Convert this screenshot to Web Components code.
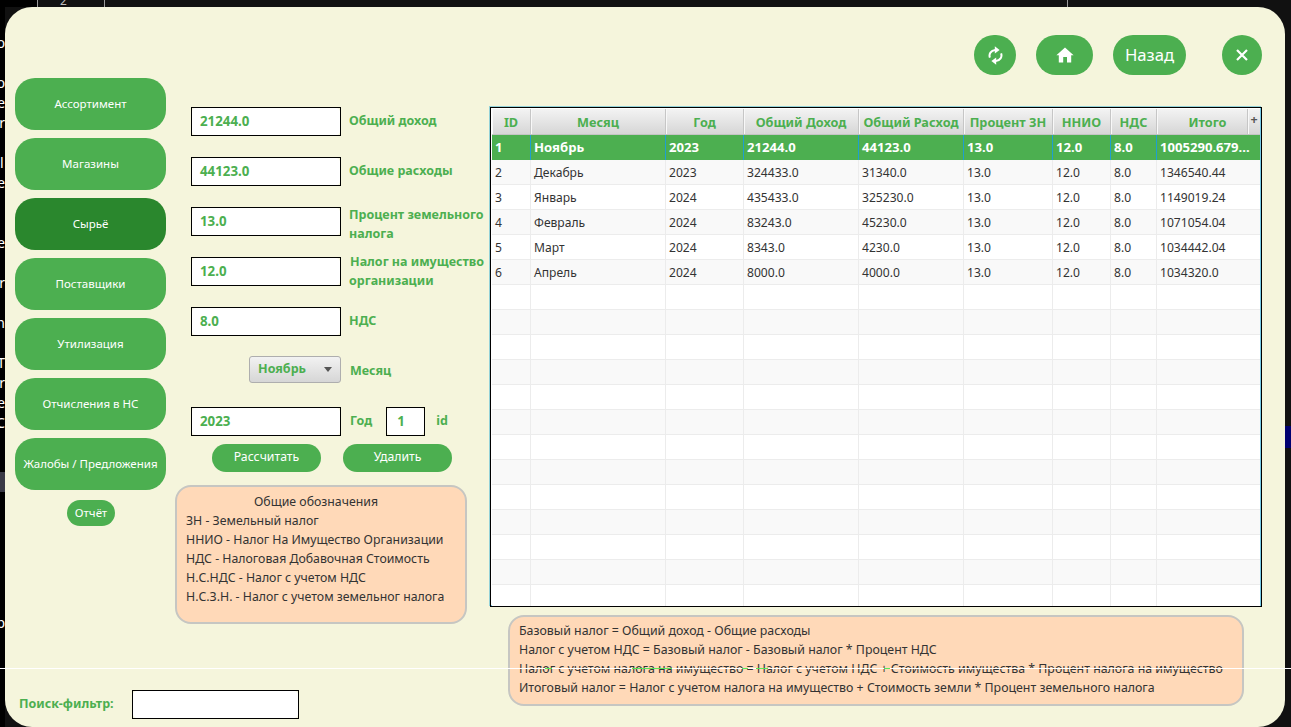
<!DOCTYPE html>
<html lang="ru">
<head>
<meta charset="utf-8">
<title>Сырьё</title>
<style>
html,body{margin:0;padding:0;background:#000;}
body{width:1291px;height:727px;overflow:hidden;font-family:"Noto Sans","Open Sans",sans-serif;}
</style>
</head>
<body>
<x-desktop>
  <x-window>
    <x-icon-btn slot="tools" w="42" icon="sync"></x-icon-btn>
    <x-icon-btn slot="tools" w="57" icon="home"></x-icon-btn>
    <x-icon-btn slot="tools" w="73" label="Назад"></x-icon-btn>
    <x-icon-btn slot="tools" w="40" gap="36" icon="close"></x-icon-btn>

    <x-nav-btn slot="nav">Ассортимент</x-nav-btn>
    <x-nav-btn slot="nav">Магазины</x-nav-btn>
    <x-nav-btn slot="nav" active>Сырьё</x-nav-btn>
    <x-nav-btn slot="nav">Поставщики</x-nav-btn>
    <x-nav-btn slot="nav">Утилизация</x-nav-btn>
    <x-nav-btn slot="nav">Отчисления в НС</x-nav-btn>
    <x-nav-btn slot="nav">Жалобы / Предложения</x-nav-btn>
    <x-small-btn slot="nav" class="report" w="48" h="26" fs="11.5">Отчёт</x-small-btn>

    <x-form slot="form"></x-form>

    <x-search slot="search"></x-search>

    <x-data-table slot="table"></x-data-table>
    <x-note slot="table" class="wide" tone="compact">
      <div>Базовый налог = Общий доход - Общие расходы</div>
      <div>Налог с учетом НДС = Базовый налог - Базовый налог * Процент НДС</div>
      <div>Налог с учетом налога на имущество = Налог с учетом НДС + Стоимость имущества * Процент налога на имущество</div>
      <div>Итоговый налог = Налог с учетом налога на имущество + Стоимость земли * Процент земельного налога</div>
    </x-note>
  </x-window>
</x-desktop>

<script>
const GREEN='#4CAF50';
const def=(name,html,init)=>{
  customElements.define(name,class extends HTMLElement{
    constructor(){super();const s=this.attachShadow({mode:'open'});s.innerHTML=typeof html==='function'?html(this):html;}
    connectedCallback(){if(init&&!this._i){this._i=1;init.call(this,this.shadowRoot);}}
  });
};

def('x-desktop',`<style>
:host{display:block;position:relative;width:1291px;height:727px;overflow:hidden;background:#111;box-sizing:border-box;padding:7px 6px 0 5px;}
.left{position:absolute;left:0;top:0;width:5px;height:727px;background:#000;overflow:hidden;color:#fff;font:14px/20px "Noto Sans",sans-serif;}
.left div{height:20px;width:5px;direction:rtl;white-space:nowrap;overflow:hidden;text-align:left;}
.corner{position:absolute;left:5px;top:0;width:32px;height:7px;background:#000;}
.vl{position:absolute;top:0;width:1px;height:7px;background:#9a9a9a;}
.two{position:absolute;left:60px;top:-6px;color:#bbb;font:12px/14px "Noto Sans",sans-serif;}
.gray{position:absolute;left:0;top:472px;width:5px;height:20px;background:#3a3a46;}
.navy{position:absolute;left:1285px;top:426px;width:6px;height:22px;background:#000070;}
.rule{position:absolute;left:0;right:0;top:668px;height:1px;z-index:5;background:linear-gradient(90deg,#fff 0,#fff 545px,#59e659 545px,#59e659 552px,#fff 552px,#fff 632px,#59e659 632px,#59e659 672px,#fff 672px,#fff 742px,#59e659 742px,#59e659 748px,#fff 748px,#fff 756px,#59e659 756px,#59e659 768px,#fff 768px,#fff 884px,#59e659 884px,#59e659 890px,#fff 890px);}
</style>
<div class="corner"></div><div class="vl" style="left:37px"></div><div class="vl" style="left:104px"></div><div class="vl" style="left:1067px"></div>
<div class="two">2</div>
<div class="left">
<div style="margin-top:33px">о</div><div></div><div>о</div><div>е</div><div>r</div><div></div><div>l</div><div>е</div><div></div><div></div><div>е</div><div></div><div>r</div><div></div><div>n</div><div></div><div>Т</div><div>r</div><div>е</div><div>С</div>
<div style="margin-top:180px">р</div>
</div>
<div class="gray"></div><div class="navy"></div>
<slot></slot>
<div class="rule"></div>`);

def('x-window',`<style>
:host{display:flex;flex-direction:column;width:1280px;height:720px;box-sizing:border-box;background:#F5F5DC;border-radius:27px;}
.tools{display:flex;justify-content:flex-end;height:40px;padding:28px 23px 0 0;}
.body{flex:1;display:flex;margin-top:3px;min-height:0;}
.left{display:flex;flex-direction:column;width:485px;flex:none;}
.top{display:flex;}
.nav{display:flex;flex-direction:column;gap:8px;width:151px;margin-left:10px;flex:none;}
.form{margin-left:9px;padding-top:29px;}
.search{margin-top:auto;padding:0 0 8px 14px;}
.right{display:flex;flex-direction:column;padding-top:29px;margin-left:0;}
</style>
<div class="tools"><slot name="tools"></slot></div>
<div class="body">
  <div class="left">
    <div class="top">
      <div class="nav"><slot name="nav"></slot></div>
      <div class="form"><slot name="form"></slot></div>
    </div>
    <div class="search"><slot name="search"></slot></div>
  </div>
  <div class="right"><slot name="table"></slot></div>
</div>`);

const ICONS={
 sync:`<svg width="15" height="19" viewBox="0 0 15 19" fill="none" stroke="#fff" stroke-width="2"><path d="M1.9 11.6C.6 8 2.8 4.4 7.2 4"/><path d="M13.1 7.4C14.4 11 12.2 14.6 7.8 15"/><path d="M6.8 .3 11.6 4 6.8 7.6z" fill="#fff" stroke="none"/><path d="M8.2 18.7 3.4 15 8.2 11.4z" fill="#fff" stroke="none"/></svg>`,
 home:`<svg width="18" height="16" viewBox="0 0 18 16"><path fill="#fff" d="M9 .5 17.6 8.2h-2.4V15.5H11V10H7.2v5.5H2.8V8.2H.4z"/></svg>`,
 close:`<svg width="12" height="12" viewBox="0 0 12 12" fill="none" stroke="#fff" stroke-width="2.2"><path d="M1 1 11 11M11 1 1 11"/></svg>`
};
def('x-icon-btn',h=>`<style>
:host{display:flex;align-items:center;justify-content:center;height:40px;width:${h.getAttribute('w')}px;margin-left:${h.getAttribute('gap')||20}px;background:${GREEN};border-radius:20px;color:#fff;font:16.7px/1 "Noto Sans",sans-serif;}
</style>${h.getAttribute('icon')?ICONS[h.getAttribute('icon')]:h.getAttribute('label')}`);

def('x-nav-btn',`<style>
:host{display:flex;align-items:center;justify-content:center;height:52px;background:${GREEN};border-radius:20px;color:#fff;font:11.5px/1 "Noto Sans",sans-serif;white-space:nowrap;}
:host([active]){background:#2A872D;}
</style><slot></slot>`);

def('x-small-btn',h=>`<style>
:host{display:flex;align-items:center;justify-content:center;flex:none;box-sizing:border-box;height:${h.getAttribute('h')}px;width:${h.getAttribute('w')}px;padding-bottom:${h.getAttribute('pb')||0}px;background:${GREEN};border-radius:14px;color:#fff;font:${h.getAttribute('fs')}px/1 "Noto Sans",sans-serif;white-space:nowrap;}
:host(.report){margin:2px 0 0 52px;}
</style><slot></slot>`);

def('x-text-box',h=>`<style>
:host{display:block;flex:none;box-sizing:border-box;height:29px;width:${h.getAttribute('w')||150}px;border:1px solid #000;background:#F5F5DC;}
div{height:100%;box-sizing:border-box;background:#fff;border-radius:4px;padding-left:${h.getAttribute('pl')||8}px;color:${GREEN};font:700 13.3px/26px "Noto Sans",sans-serif;}
</style><div><slot></slot></div>`);

def('x-field',h=>`<style>
:host{display:flex;align-items:center;gap:8px;height:29px;}
.l{color:${GREEN};font:700 12.5px/19px "Noto Sans",sans-serif;white-space:nowrap;position:relative;top:-1px;}
</style><x-text-box><slot name="v"></slot></x-text-box><div class="l"><slot></slot></div>`);

def('x-form',`<style>
:host{display:flex;flex-direction:column;width:310px;}
.rows{display:flex;flex-direction:column;gap:21px;margin-left:16px;}
.l{color:${GREEN};font:700 12.5px/19px "Noto Sans",sans-serif;white-space:nowrap;}
.combo-row{display:flex;align-items:center;height:27px;margin:-1px 0 3px 58px;gap:9px;}
.combo{box-sizing:border-box;width:92px;height:27px;display:flex;align-items:center;justify-content:space-between;padding:0 8px 0 8px;border:1px solid #aeaeae;border-radius:3px;background:linear-gradient(#f2f2f2,#d6d6d6);color:${GREEN};font:700 12.5px/1 "Noto Sans",sans-serif;}
.tri{width:0;height:0;border:4.5px solid transparent;border-top:5px solid #555;border-bottom:0;}
.year{display:flex;align-items:center;height:29px;}
.btns{display:flex;gap:22px;margin:8px 0 13px 37px;}
x-note{align-self:flex-start;}
</style>
<div class="rows">
  <x-field><span slot="v">21244.0</span>Общий доход</x-field>
  <x-field><span slot="v">44123.0</span>Общие расходы</x-field>
  <x-field><span slot="v">13.0</span><span style="position:relative;top:3px">Процент земельного<br>налога</span></x-field>
  <x-field><span slot="v">12.0</span><span style="margin-left:1px">Налог на имущество<br>организации</span></x-field>
  <x-field><span slot="v">8.0</span><span>НДС</span></x-field>
  <div class="combo-row"><div class="combo">Ноябрь<span class="tri"></span></div><span class="l" style="position:relative;top:1px">Месяц</span></div>
  <div class="year"><x-text-box>2023</x-text-box><span class="l" style="margin-left:9px;position:relative;top:-1px">Год</span><x-text-box w="39" pl="10" style="margin-left:14px">1</x-text-box><span class="l" style="margin-left:11px;position:relative;top:-1px">id</span></div>
</div>
<div class="btns"><x-small-btn w="109" h="28" fs="12.25" pb="2">Рассчитать</x-small-btn><x-small-btn w="109" h="28" fs="12.25" pb="2">Удалить</x-small-btn></div>
<x-note tone="legend">
  <div style="text-align:center">Общие обозначения</div>
  <div>ЗН - Земельный налог</div>
  <div>ННИО - Налог На Имущество Организации</div>
  <div>НДС - Налоговая Добавочная Стоимость</div>
  <div>Н.С.НДС - Налог с учетом НДС</div>
  <div>Н.С.З.Н. - Налог с учетом земельног налога</div>
</x-note>`);

def('x-note',`<style>
:host{display:block;box-sizing:border-box;border:2px solid #c6c6c2;border-radius:16px;background:#FFD9B8;color:#333;font:12.3px/19px "Noto Sans",sans-serif;white-space:nowrap;}
:host([tone=legend]){width:292px;height:139px;padding:5px 19px 4px 9px;}
:host([tone=compact]){width:736px;height:91px;margin:8px 0 0 18px;padding:4px 9px;font-size:12.36px;}
</style><slot></slot>`);

def('x-search',`<style>
:host{display:flex;align-items:center;gap:18px;}
.l{color:${GREEN};font:700 12.5px/1 "Noto Sans",sans-serif;white-space:nowrap;}
</style><span class="l">Поиск-фильтр:</span><x-text-box w="167"></x-text-box>`);

const COLS=[39,135,78,115,105,89,58,46];
const HEAD=['ID','Месяц','Год','Общий Доход','Общий Расход','Процент ЗН','ННИО','НДС','Итого'];
const DATA=[
 ['1','Ноябрь','2023','21244.0','44123.0','13.0','12.0','8.0','1005290.679...'],
 ['2','Декабрь','2023','324433.0','31340.0','13.0','12.0','8.0','1346540.44'],
 ['3','Январь','2024','435433.0','325230.0','13.0','12.0','8.0','1149019.24'],
 ['4','Февраль','2024','83243.0','45230.0','13.0','12.0','8.0','1071054.04'],
 ['5','Март','2024','8343.0','4230.0','13.0','12.0','8.0','1034442.04'],
 ['6','Апрель','2024','8000.0','4000.0','13.0','12.0','8.0','1034320.0']
];
def('x-data-table',`<style>
:host{display:block;box-sizing:border-box;width:772px;height:500px;border:1px solid #000;padding:1px;background:#fff;box-shadow:-1px -1px 0 rgba(3,158,211,.4),inset -1px -1px 0 rgba(3,158,211,.55);overflow:hidden;color:#333;font:12.1px/1 "Noto Sans",sans-serif;}
.head,.row{display:grid;grid-template-columns:${COLS.map(c=>c+'px').join(' ')} 1fr;}
.head{grid-template-columns:${COLS.map(c=>c+'px').join(' ')} 91px 1fr;height:26px;box-sizing:border-box;background:linear-gradient(#f3f3f3,#d6d6d6);border-bottom:1px solid #c4c4c4;}
.head>div{display:flex;align-items:center;justify-content:center;box-sizing:border-box;padding-top:2px;border-right:1px solid #c6c6c6;box-shadow:inset 1px 0 0 #f8f8f8;color:${GREEN};font-weight:700;font-size:12.7px;white-space:nowrap;}
.head>div:nth-child(9){padding-left:11px;}
.head>.plus{border:0;color:#555;font-size:12.5px;padding:0 0 2px;}
.rows{height:471px;overflow:hidden;}
.row{height:25px;box-sizing:border-box;background:#fff;border-bottom:1px solid #ececec;}
.row:nth-child(even){background:#f9f9f9;}
.row>div{box-sizing:border-box;border-right:1px solid #ececec;padding-left:3px;line-height:26px;white-space:nowrap;overflow:hidden;}
.row>div:last-child{border-right:0;}
.row.sel{background:${GREEN};border-bottom:0;color:#fff;font-weight:700;font-size:13.1px;}
.row.sel>div{border-right-color:#1E9FCF;line-height:25px;}
</style><div class="head"></div><div class="rows"></div>`,function(s){
  const el=(c,t)=>{const d=document.createElement('div');if(c)d.className=c;if(t!=null)d.textContent=t;return d;};
  const h=s.querySelector('.head');
  HEAD.forEach(t=>h.append(el('',t)));
  h.append(el('plus','+'));
  const r=s.querySelector('.rows');
  for(let i=0;i<19;i++){
    const row=el(i===0?'row sel':'row');
    const d=DATA[i]||Array(9).fill('');
    d.forEach(t=>row.append(el('',t)));
    r.append(row);
  }
});
</script>
</body>
</html>
